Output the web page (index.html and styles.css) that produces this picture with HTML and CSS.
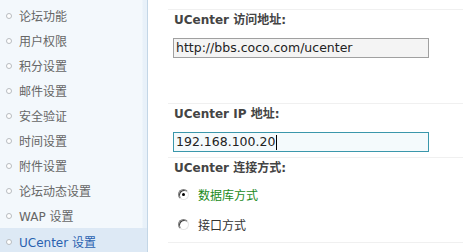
FILE: index.html
```html
<!DOCTYPE html>
<html lang="zh">
<head>
<meta charset="utf-8">
<link rel="stylesheet" href="styles.css">
</head>
<body>
<div class="page">
  <nav class="sidebar">
    <ul class="menu">
      <li class="item"><span class="dot"></span>论坛功能</li>
      <li class="item"><span class="dot"></span>用户权限</li>
      <li class="item"><span class="dot"></span>积分设置</li>
      <li class="item"><span class="dot"></span>邮件设置</li>
      <li class="item"><span class="dot"></span>安全验证</li>
      <li class="item"><span class="dot"></span>时间设置</li>
      <li class="item"><span class="dot"></span>附件设置</li>
      <li class="item"><span class="dot"></span>论坛动态设置</li>
      <li class="item"><span class="dot"></span>WAP 设置</li>
      <li class="item active"><span class="dot"></span>UCenter 设置</li>
    </ul>
  </nav>
  <main class="main">
    <section class="sec sec1">
      <div class="label">UCenter 访问地址:</div>
      <div class="field">http://bbs.coco.com/ucenter</div>
    </section>
    <section class="sec sec2">
      <div class="label">UCenter IP 地址:</div>
      <div class="field focus">192.168.100.20<span class="caret"></span></div>
    </section>
    <section class="sec sec3">
      <div class="label">UCenter 连接方式:</div>
      <div class="radio-row on"><span class="radio checked"></span>数据库方式</div>
      <div class="radio-row"><span class="radio"></span>接口方式</div>
    </section>
  </main>
</div>
</body>
</html>
```
FILE: styles.css
```css
* { box-sizing: border-box; }
html, body {
  margin: 0;
  padding: 0;
  background: #fff;
  font-family: "DejaVu Sans", "Noto Sans CJK SC", sans-serif;
  font-size: 12px;
}
.page {
  display: flex;
  width: 463px;
  height: 252px;
  overflow: hidden;
}
.sidebar {
  width: 148px;
  flex: none;
  background: linear-gradient(to right, #f3f8fc 0, #f3f8fc 142px, #e8f1f9 143px, #e8f1f9 147px);
  border-right: 1px solid #c3d6e6;
  padding-top: 3px;
}
.menu {
  list-style: none;
  margin: 0;
  padding: 0;
}
.item {
  display: flex;
  align-items: center;
  height: 25px;
  padding-left: 6px;
  color: #666;
  font-family: "DejaVu Sans", "Noto Sans CJK SC", sans-serif;
  font-size: 12px;
  white-space: nowrap;
}
.item.active {
  background: #dde9f5;
  color: #2a62b0;
  height: 27px;
}
.dot {
  width: 6px;
  height: 6px;
  border: 1px solid #b8bcc0;
  border-radius: 50%;
  margin-right: 7px;
  background: #fff;
}
.main {
  flex: 1;
  padding: 9px 0 0 20px;
}
.sec {
  border-top: 1px solid #f0f0f0;
  padding-left: 6px;
}
.label {
  font-weight: bold;
  color: #444;
  height: 14px;
  line-height: 14px;
  font-size: 12px;
  white-space: nowrap;
}
.sec1 { height: 94px; padding-top: 3px; }
.sec2 { height: 54px; padding-top: 3px; }
.sec3 { height: 86px; padding-top: 3px; border-bottom: 1px solid #f0f0f0; }
.field {
  margin-top: 11px;
  width: 256px;
  height: 20px;
  border: 1px solid #a0a0a0;
  background: #f4f4f4;
  color: #222;
  font-size: 12.5px;
  line-height: 18px;
  padding-left: 2px;
  display: flex;
  align-items: center;
  margin-left: -1px;
}
.field.focus {
  border-color: #3a97ab;
  background: #f4fafc;
}
.caret {
  width: 1px;
  height: 15px;
  background: #000;
  margin-left: 1px;
}
.sec3 .label { margin-bottom: 4px; }
.radio-row {
  display: flex;
  align-items: center;
  height: 30px;
  padding-left: 4px;
  color: #333;
  font-size: 12px;
}
.radio-row.on { color: #1a8a1a; }
.radio {
  width: 11px;
  height: 11px;
  border-radius: 50%;
  border: 1px solid;
  border-color: #808080 #e6e6e6 #e6e6e6 #808080;
  background: #fff;
  margin-right: 9px;
  position: relative;
  box-shadow: inset 1px 1px 0 #444;
}
.radio.checked::after {
  content: "";
  position: absolute;
  left: 3px;
  top: 3px;
  width: 3px;
  height: 3px;
  border-radius: 50%;
  background: #000;
}
```
